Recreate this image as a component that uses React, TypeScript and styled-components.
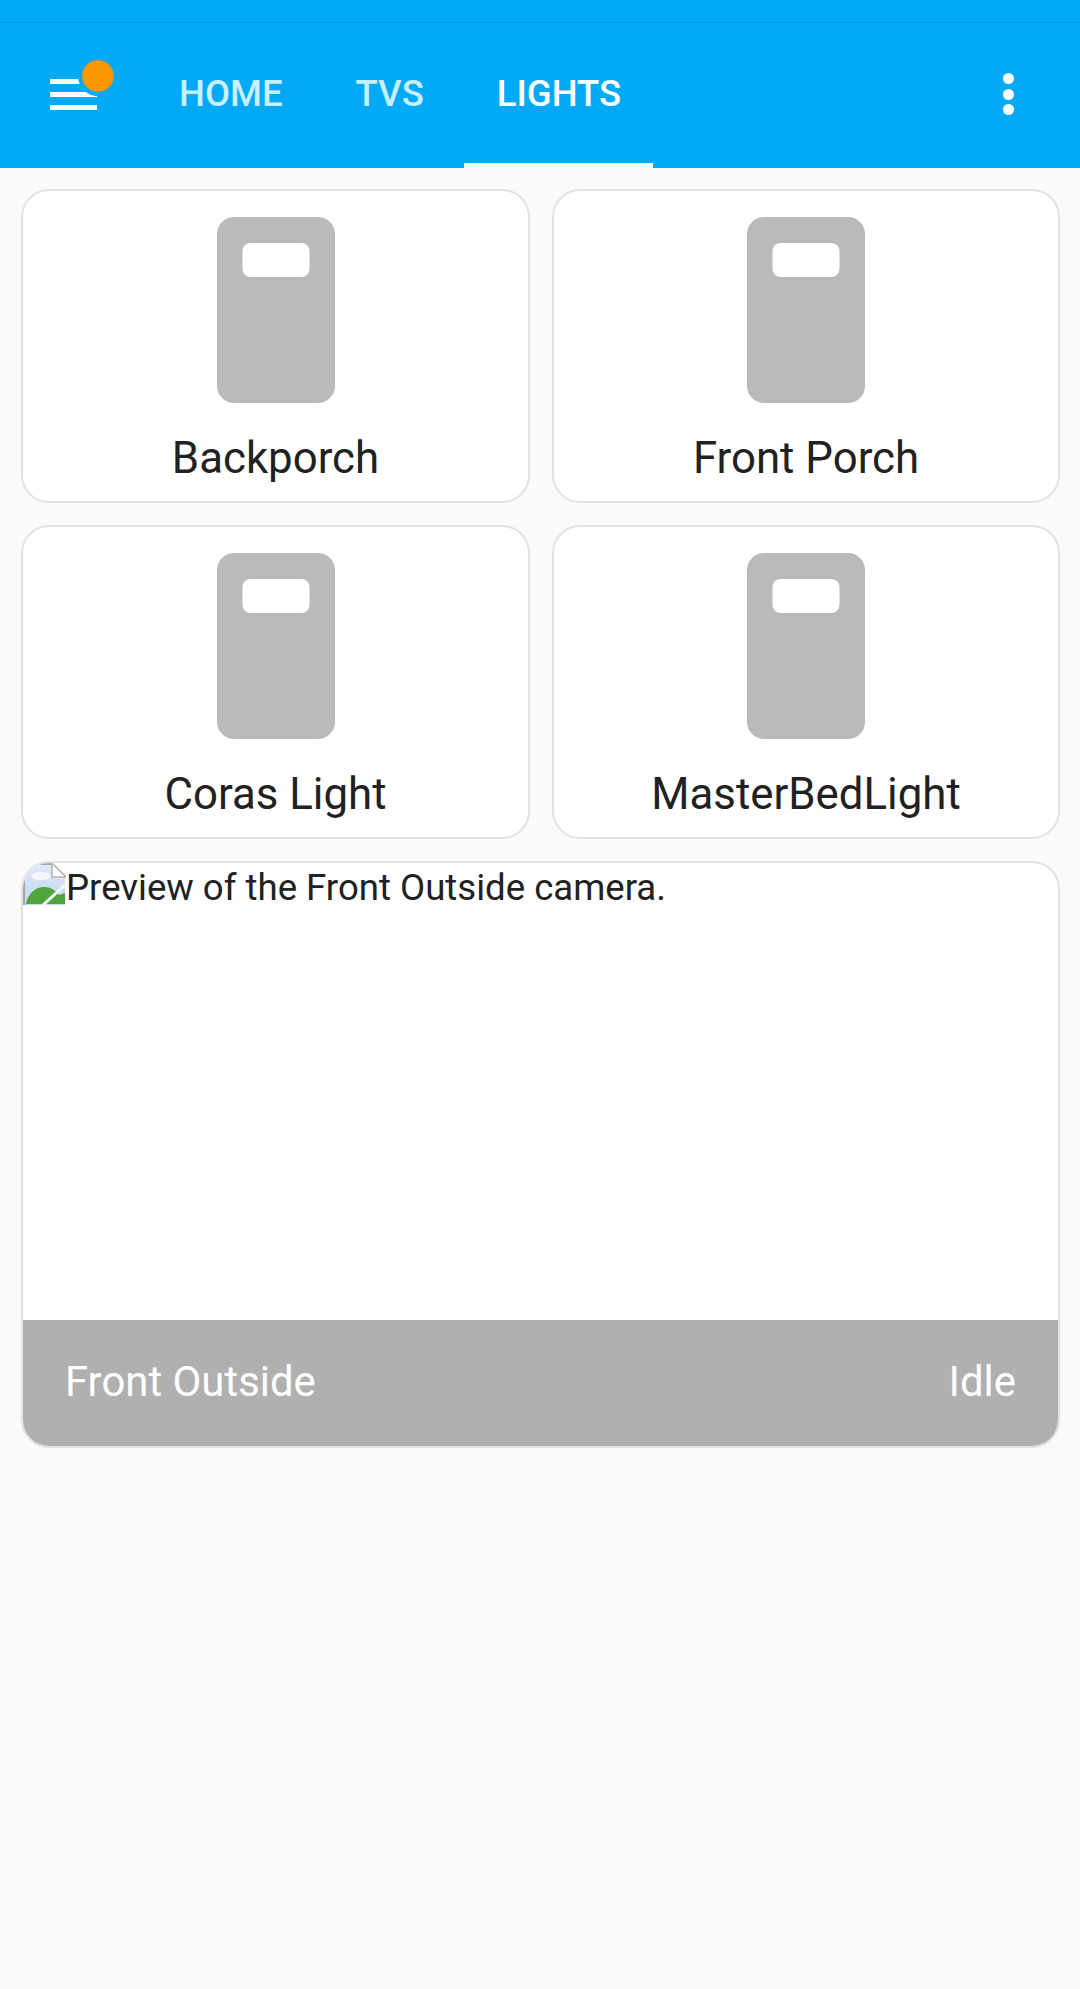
import React from "react";
import styled, { createGlobalStyle } from "styled-components";

const Global = createGlobalStyle`
  html, body { margin: 0; padding: 0; background: #fafafa; }
  body { font-family: Roboto, "Noto Sans", sans-serif; }
`;

const Page = styled.div`
  width: 1080px;
  height: 1989px;
  background: #fafafa;
  display: flex;
  flex-direction: column;
  overflow: hidden;
`;

const StatusBar = styled.div`
  height: 22px;
  background: #04a9f5;
  border-bottom: 1px solid #0499de;
`;

const Toolbar = styled.header`
  height: 145px;
  background: #04a9f5;
  display: flex;
  align-items: stretch;
  flex: none;
`;

const MenuButton = styled.div`
  position: relative;
  width: 146px;
  flex: none;
  display: flex;
  flex-direction: column;
  gap: 8px;
  padding: 56px 0 0 50px;
  box-sizing: border-box;
`;

const MenuBar = styled.span`
  display: block;
  width: 47px;
  height: 5px;
  background: #fff;
`;

const Badge = styled.span`
  position: absolute;
  left: 78px;
  top: 33px;
  width: 32px;
  height: 32px;
  border-radius: 50%;
  background: #ff9800;
  border: 4px solid #04a9f5;
  box-shadow: inset 0 0 0 1px #d8952a;
`;

const Tabs = styled.nav`
  display: flex;
  flex: 1;
  gap: 8px;
`;

const Tab = styled.div<{ $active?: boolean }>`
  padding: 50px 32px 0 33px;
  height: 100%;
  box-sizing: border-box;
  display: flex;
  align-items: flex-start;
  font-size: 36.5px;
  line-height: 42px;
  font-weight: 500;
  color: ${(p) => (p.$active ? "#ffffff" : "#c6f0fd")};
  border-bottom: 5px solid ${(p) => (p.$active ? "#fafafa" : "transparent")};
`;

const Overflow = styled.div`
  width: 72px;
  margin-right: 36px;
  flex: none;
  display: flex;
  flex-direction: column;
  align-items: center;
  gap: 4.5px;
  padding-top: 50px;
  box-sizing: border-box;
`;

const Dot = styled.span`
  width: 11px;
  height: 11px;
  border-radius: 50%;
  background: #fff;
`;

const Content = styled.main`
  padding: 21px 20px 0 21px;
  display: flex;
  flex-direction: column;
  gap: 22px;
`;

const Grid = styled.div`
  display: grid;
  grid-template-columns: 509px 508px;
  grid-auto-rows: 314px;
  gap: 22px;
`;

const Card = styled.div`
  background: #fff;
  border: 2px solid #e2e2e2;
  border-radius: 28px;
  box-sizing: border-box;
  display: flex;
  flex-direction: column;
  align-items: center;
  padding-top: 26px;
`;

const Icon = styled.svg`
  width: 118px;
  height: 186px;
  flex: none;
`;

const Label = styled.div`
  margin-top: 30px;
  font-size: 43.8px;
  line-height: 50px;
  color: #212121;
`;

const Camera = styled.section`
  height: 587px;
  width: 1039px;
  background: #fff;
  border: 2px solid #e2e2e2;
  border-radius: 28px;
  box-sizing: border-box;
  display: flex;
  flex-direction: column;
  overflow: hidden;
`;

const Preview = styled.div`
  flex: 1;
  display: flex;
  align-items: flex-start;
  font-size: 36.6px;
  line-height: 42px;
  color: #212121;
`;

const Broken = styled.svg`
  width: 43px;
  height: 42px;
  flex: none;
`;

const AltText = styled.span`
  display: block;
  padding-top: 4px;
`;

const Footer = styled.div`
  height: 126px;
  background: #b0b0b0;
  color: #fff;
  display: flex;
  align-items: center;
  justify-content: space-between;
  padding: 0 42px 4px;
  box-sizing: border-box;
  font-size: 41.9px;
  flex: none;
`;

const names = ["Backporch", "Front Porch", "Coras Light", "MasterBedLight"];

const DoorIcon = () => (
  <Icon viewBox="0 0 118 186">
    <rect width="118" height="186" rx="17" fill="#bababa" />
    <rect x="25.5" y="26" width="67" height="34" rx="8" fill="#fff" />
  </Icon>
);

const BrokenImage = () => (
  <Broken viewBox="0 0 43 42">
    <defs>
      <linearGradient id="sky" x1="0" y1="0" x2="0" y2="1">
        <stop offset="0" stopColor="#dfe9f7" />
        <stop offset="1" stopColor="#c0d5f1" />
      </linearGradient>
    </defs>
    <path d="M1 42V1h30l11 11v30z" fill="url(#sky)" />
    <ellipse cx="18" cy="13" rx="10" ry="4" fill="#f3f7fc" />
    <path d="M1 42V1h29" fill="none" stroke="#a3a3a3" strokeWidth="2" />
    <path d="M29 0v14h14z" fill="#fff" />
    <path d="M29 0v14h14L30 1" fill="none" stroke="#b5b5b5" strokeWidth="1.6" />
    <path d="M3 41C5 30 13 24 21 24c7 0 11 3 15 8l6-2v11z" fill="#4fa53a" />
    <path d="M20 42 42 22" stroke="#f6f9f3" strokeWidth="3" />
  </Broken>
);

export default function App() {
  return (
    <Page>
      <Global />
      <StatusBar />
      <Toolbar>
        <MenuButton>
          <MenuBar />
          <MenuBar />
          <MenuBar />
          <Badge />
        </MenuButton>
        <Tabs>
          <Tab>HOME</Tab>
          <Tab>TVS</Tab>
          <Tab $active>LIGHTS</Tab>
        </Tabs>
        <Overflow>
          <Dot />
          <Dot />
          <Dot />
        </Overflow>
      </Toolbar>
      <Content>
        <Grid>
          {names.map((n) => (
            <Card key={n}>
              <DoorIcon />
              <Label>{n}</Label>
            </Card>
          ))}
        </Grid>
        <Camera>
          <Preview>
            <BrokenImage />
            <AltText>Preview of the Front Outside camera.</AltText>
          </Preview>
          <Footer>
            <span>Front Outside</span>
            <span>Idle</span>
          </Footer>
        </Camera>
      </Content>
    </Page>
  );
}
